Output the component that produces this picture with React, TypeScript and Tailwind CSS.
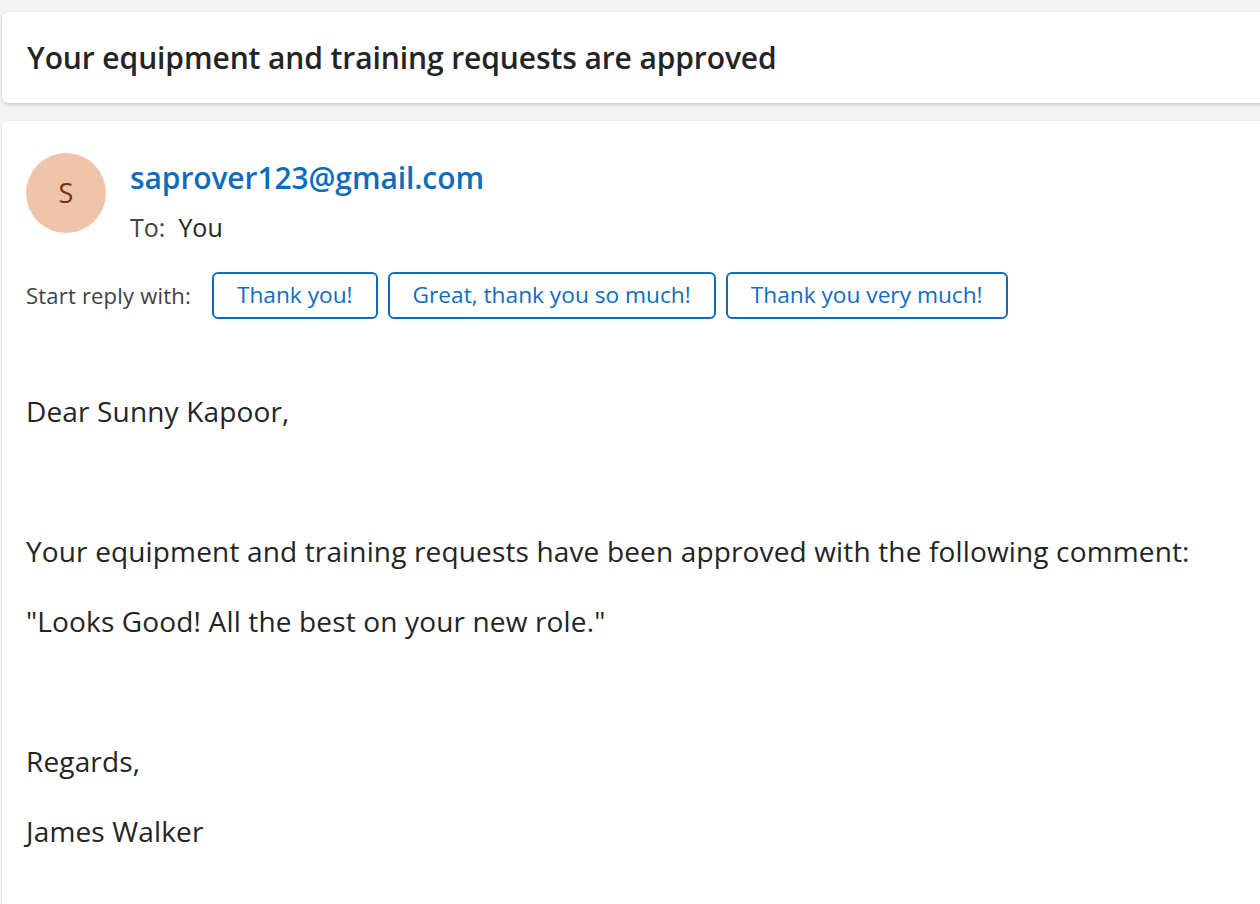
const replies = ['Thank you!', 'Great, thank you so much!', 'Thank you very much!']

export default function App() {
    return (
        <div
            className="w-[1260px] h-[904px] overflow-hidden bg-[#f5f5f5] pt-[12px] pl-[2px]"
            style={{ fontFamily: '"Open Sans", "Noto Sans", sans-serif' }}
        >
            <div className="w-[1290px] h-[91px] bg-white rounded-[6px] shadow-[0_2px_4px_rgba(0,0,0,0.14),0_0_2px_rgba(0,0,0,0.12)] flex items-center pl-[25px]">
                <h1 className="text-[30px] font-semibold text-[#242424] tracking-[-0.1px]">
                    Your equipment and training requests are approved
                </h1>
            </div>

            <div className="mt-[18px] w-[1290px] h-[800px] bg-white rounded-[6px] shadow-[0_0_2px_rgba(0,0,0,0.12),0_1px_2px_rgba(0,0,0,0.1)] pl-[24px] pt-[32px]">
                <div className="flex items-start gap-[24px]">
                    <div className="w-[80px] h-[80px] rounded-full bg-[#efc4ab] flex items-center justify-center text-[27px] text-[#7a2f0d]">
                        S
                    </div>
                    <div className="flex flex-col">
                        <span className="text-[30px] font-semibold text-[#0f6cbd] leading-[50px] tracking-[-0.1px]">
                            saprover123@gmail.com
                        </span>
                        <span className="text-[25px] leading-[48px] text-[#242424]">
                            <span className="text-[#424242]">To:</span>&nbsp; You
                        </span>
                    </div>
                </div>

                <div className="mt-[21px] flex items-center gap-[10px]">
                    <span className="text-[22px] text-[#424242] mr-[11px] tracking-[0.2px]">Start reply with:</span>
                    {replies.map(r => (
                        <button
                            key={r}
                            className="h-[47px] px-[23px] border-2 border-[#0f6cbd] rounded-[6px] text-[22.7px] text-[#0f6cbd] bg-white"
                        >
                            {r}
                        </button>
                    ))}
                </div>

                <div className="mt-[74px] text-[28px] text-[#242424] leading-[36px] tracking-[0.15px]">
                    <p className="mb-[34px]">Dear Sunny Kapoor,</p>
                    <p className="mb-[34px]">&nbsp;</p>
                    <p className="mb-[34px]">
                        Your equipment and training requests have been approved with the following comment:
                    </p>
                    <p className="mb-[34px]">"Looks Good! All the best on your new role."</p>
                    <p className="mb-[34px]">&nbsp;</p>
                    <p className="mb-[34px]">Regards,</p>
                    <p className="mb-[34px]">James Walker</p>
                </div>
            </div>
        </div>
    )
}
